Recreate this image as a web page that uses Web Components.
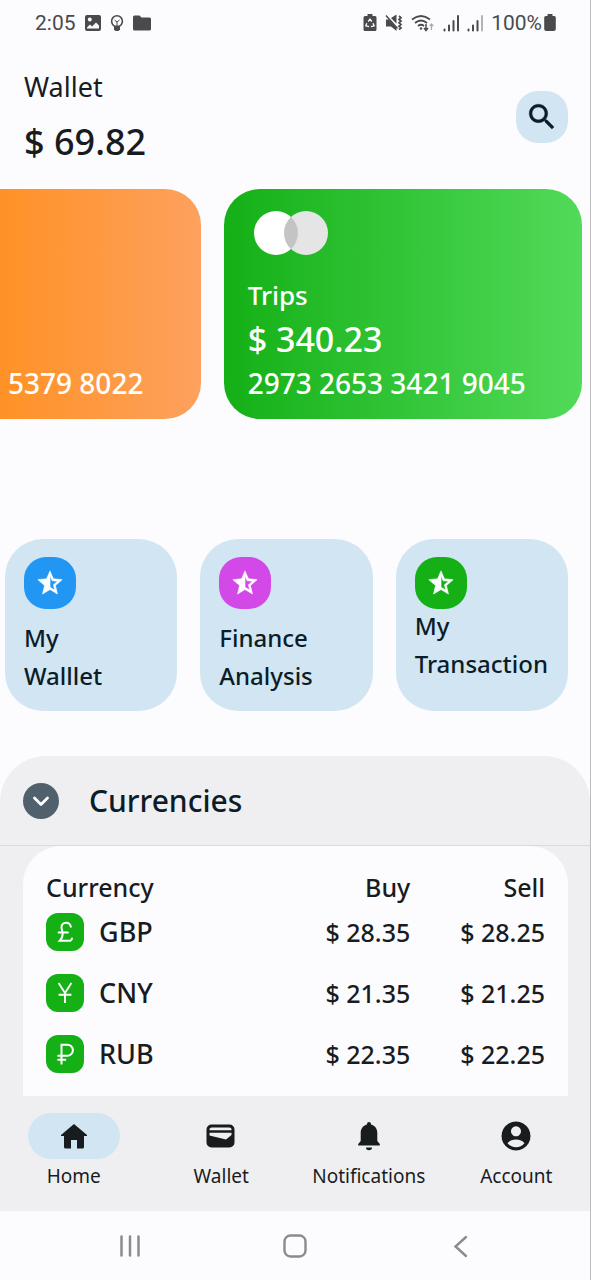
<!DOCTYPE html>
<html lang="en">
<head>
<meta charset="utf-8">
<meta name="viewport" content="width=device-width, initial-scale=1">
<title>Wallet</title>
<style>
  html { height: 100%; }
  body {
    margin: 0;
    min-height: 100%;
    font-family: "Noto Sans", "Open Sans", sans-serif;
    --surface: #fcfcff;
    --surface-dim: #efeff1;
    --tint: #d2e5f3;
    --ink: #191c1f;
    --ink-blue: #0b1d29;
    --green: #14b016;
    background: var(--surface);
    color: var(--ink);
  }
</style>
</head>
<body>
<wallet-app></wallet-app>

<script>
const ICONS = {
  image: [18, 18, '<path fill-rule="evenodd" d="M3 1h12a2 2 0 0 1 2 2v12a2 2 0 0 1-2 2H3a2 2 0 0 1-2-2V3a2 2 0 0 1 2-2zM5.800 3.600a2 2 0 1 0 .01 0zM3 14.500h12v-3l-3-3-4 4-2-2-3 3z"/>'],
  bulb: [14, 18, '<path d="M4.500 12.200C2.500 10.800 1.600 9.300 1.600 7.200a5.400 5.400 0 0 1 10.800 0c0 2.100-.9 3.600-2.900 5z" fill="none" stroke="currentColor" stroke-width="1.500"/><path d="M4.500 6l2.500 2 2.500-2M7 8v4" fill="none" stroke="currentColor" stroke-width="1"/><path d="M4 13h6v2.500L8.500 17h-3L4 15.500z"/>'],
  folder: [20, 18, '<path d="M2.500 1.500h5l2 2h8a1.500 1.500 0 0 1 1.500 1.500v10a1.500 1.500 0 0 1-1.500 1.500h-15A1.500 1.500 0 0 1 1 15V3a1.500 1.500 0 0 1 1.500-1.500z"/>'],
  recycle: [14, 20, '<path d="M4.500 1h5v2H12a1.500 1.500 0 0 1 1.500 1.500v12A1.500 1.500 0 0 1 12 18H2a1.500 1.500 0 0 1-1.500-1.500v-12A1.500 1.500 0 0 1 2 3h2.500z"/><path d="M5.200 8.500L7 6l1.800 2.500M10 10.200l1.200 2.600-3.200.8M3.800 10.200l-1 2.600 3.200.8" fill="none" stroke="#fcfcff" stroke-width="1.300"/>'],
  mute: [18, 18, '<path d="M1 5.500h3l7.500 8V17L6 12.500H1zM6 4l5.500-3.500v9z"/><path d="M1 1.500l11.500 13" stroke="currentColor" stroke-width="1.500"/><path d="M14 2l2 1.700-2 1.700 2 1.700-2 1.700 2 1.700-2 1.700 2 1.700-2 1.700" fill="none" stroke="currentColor" stroke-width="1.700"/>'],
  wifi: [24, 18, '<g fill="none" stroke="currentColor" stroke-width="1.800"><path d="M1 5.500q9-7 18 0M4 9q6-5 12 0M7 12q3-2.500 6 0"/></g><circle cx="10" cy="14.500" r="1.200"/><path d="M15 10v6M13 14l2 2.500 2-2.500" fill="none" stroke="currentColor" stroke-width="1.500"/><path d="M20.500 16v-6M18.700 12l1.800-2 1.800 2" fill="none" stroke="#a8a8aa" stroke-width="1.200"/>'],
  signal: [16, 18, '<g stroke="currentColor" stroke-width="2" stroke-linecap="round"><path d="M1.500 15.500v1M6 11.500v5M10.500 7v9.500M15 2v14.500"/></g>'],
  signalLow: [16, 18, '<g stroke="currentColor" stroke-width="2" stroke-linecap="round"><path d="M1.500 15.500v1M6 11.500v5M10.500 7v9.500"/><path d="M15 2v14.500" stroke="#b4b4b6"/></g>'],
  battery: [12, 20, '<path d="M3.500 1h5v2h1.800a1.500 1.500 0 0 1 1.500 1.500V16a2 2 0 0 1-2 2H2.200a2 2 0 0 1-2-2V4.500A1.500 1.500 0 0 1 1.700 3h1.800z"/>'],
  search: [24, 24, '<path d="M15.500 14h-.79l-.28-.27C15.410 12.590 16 11.110 16 9.500 16 5.910 13.090 3 9.500 3S3 5.910 3 9.500 5.910 16 9.500 16c1.610 0 3.090-.59 4.230-1.570l.27.28v.79l5 4.990L20.490 19l-4.990-5zm-6 0C7.010 14 5 11.990 5 9.500S7.010 5 9.500 5 14 7.010 14 9.500 11.990 14 9.500 14z" stroke="currentColor" stroke-width=".3"/>'],
  star: [24, 24, '<path stroke="currentColor" stroke-width=".5" stroke-linejoin="round" d="M21.700 9.300l-7-.65L12 2.300 9.300 8.650l-7 .65 5.350 4.700-1.600 6.800L12 17.200l5.950 3.600-1.600-6.800zM12 15.400V6.100l1.710 4.040 4.380.38-3.320 2.880 1 4.280z"/>'],
  chevron: [24, 24, '<path d="M5.500 9l6.500 6.500L18.500 9" fill="none" stroke="currentColor" stroke-width="2.800" stroke-linecap="round" stroke-linejoin="round"/>'],
  pound: [24, 24, '<path d="M17 7.500C16.500 5 14.800 4 13 4 10.500 4 9 5.800 9 8c0 2 1 3 1 5.500 0 2.500-1 4.500-2.500 6h8c1.500 0 2.200-.8 2.500-2M6.500 12.500h8" fill="none" stroke="currentColor" stroke-width="1.700" stroke-linecap="round"/>'],
  yuan: [24, 24, '<path d="M6.500 3.500L12 12l5.500-8.500M12 12v8.500M6.500 13.500h11" fill="none" stroke="currentColor" stroke-width="1.600"/>'],
  ruble: [24, 24, '<path d="M9 21V4h5a4.500 4.500 0 0 1 0 9.500H5.500M5.500 17H13" fill="none" stroke="currentColor" stroke-width="1.700"/>'],
  home: [28, 28, '<path d="M14 2L27 13v1H24V25a1.500 1.500 0 0 1-1.500 1.500H17v-8.500h-6v8.500H5.500A1.500 1.500 0 0 1 4 25V14H1v-1z"/>'],
  wallet: [30, 26, '<path fill-rule="evenodd" d="M5.500 1.500h18a5 5 0 0 1 5 5v13a5 5 0 0 1-5 5h-18a5 5 0 0 1-5-5v-13a5 5 0 0 1 5-5zM6 4.500a2.500 2.500 0 0 0-2.500 2.800h22A2.500 2.500 0 0 0 23 4.500zM3.500 9.800v2.700l16.500 4 5.500-4.500V9.800z"/>'],
  bell: [24, 30, '<path d="M12 1a2 2 0 0 1 2 2v.6c4 1 6.300 4.200 6.300 8.400V20l2.500 3v1.500H1.200V23l2.500-3v-8c0-4.200 2.300-7.400 6.300-8.400V3a2 2 0 0 1 2-2zM9 26.500h6a3 2.800 0 0 1-6 0z"/>'],
  account: [30, 30, '<path fill-rule="evenodd" d="M15 .5a14.500 14.500 0 1 0 .01 0zM15 5.300a5 5 0 1 1-.01 0zM15 18.500c3.600 0 6.600 1.300 8.500 3.700A11.200 11.200 0 0 1 15 26.200a11.200 11.200 0 0 1-8.500-4C8.400 19.800 11.400 18.500 15 18.500z"/>'],
  recents: [24, 24, '<path d="M3.500 2.500v19M12 2.500v19M20.500 2.500v19" stroke="currentColor" stroke-width="2.500" stroke-linecap="round"/>'],
  square: [24, 24, '<rect x="1.500" y="1.500" width="21" height="21" rx="6" fill="none" stroke="currentColor" stroke-width="2.400"/>'],
  back: [24, 24, '<path d="M18 3L7.500 12.500 18 22" fill="none" stroke="currentColor" stroke-width="2.400" stroke-linecap="round"/>'],
  network: [74, 44, '<circle cx="22" cy="22" r="22" fill="#fff"/><circle cx="52" cy="22" r="22" fill="#e5e5e5"/><path d="M37 6a22 22 0 0 1 0 32a22 22 0 0 1 0-32z" fill="#c4c4c4"/>']
};

function define(name, html, setup) {
  const tpl = document.createElement('template');
  tpl.innerHTML = html;
  customElements.define(name, class extends HTMLElement {
    constructor() {
      super();
      this.attachShadow({ mode: 'open' }).append(tpl.content.cloneNode(true));
    }
    connectedCallback() {
      if (setup) setup(this, this.shadowRoot);
    }
  });
}

define('app-icon', `
  <style>:host { display: block; flex: none; line-height: 0 } svg { display: block; fill: currentColor }</style>
  <svg aria-hidden="true"></svg>`, (el, root) => {
  const [w, h, body] = ICONS[el.getAttribute('name')];
  const scale = (Number(el.getAttribute('size')) || w) / w;
  const svg = root.querySelector('svg');
  svg.setAttribute('viewBox', `0 0 ${w} ${h}`);
  svg.setAttribute('width', w * scale);
  svg.setAttribute('height', h * scale);
  svg.innerHTML = body;
});

define('status-bar', `
  <style>
    :host { display: flex; justify-content: space-between; height: 46px; padding: 0 34px 0 35px;
            color: #4a4a4c; font: 21px/46px Roboto, sans-serif; }
    div { display: flex; align-items: center; gap: 8px; }
    .charge { display: flex; align-items: center; gap: 2px; }
  </style>
  <div><span>2:05</span><app-icon name="image"></app-icon><app-icon name="bulb"></app-icon><app-icon name="folder"></app-icon></div>
  <div><app-icon name="recycle"></app-icon><app-icon name="mute"></app-icon><app-icon name="wifi"></app-icon><app-icon name="signal"></app-icon><app-icon name="signalLow"></app-icon><span class="charge">100%<app-icon name="battery"></app-icon></span></div>`);

define('balance-header', `
  <style>
    :host { display: flex; justify-content: space-between; align-items: center; padding: 22px 22px 23px 24px; }
    h1, p { margin: 0; }
    h1 { font-size: 27px; line-height: 38px; font-weight: 400; }
    p { margin-top: 12px; font-size: 36px; line-height: 48px; font-weight: 500; }
    button { display: grid; place-items: center; width: 52px; height: 52px; padding: 0; border: 0;
             border-radius: 22px; background: var(--tint); color: var(--ink-blue); }
  </style>
  <div><h1>Wallet</h1><p>$ 69.82</p></div>
  <button type="button" aria-label="Search"><app-icon name="search" size="34"></app-icon></button>`);

define('bank-card', `
  <style>
    :host { display: flex; flex-direction: column; justify-content: flex-end; box-sizing: border-box;
            min-width: 0; height: 230px; padding: 22px 24px 14px; border-radius: 36px; color: #fff;
            background: linear-gradient(90deg, #14b016, #52da5a); font-weight: 500; line-height: 44px; }
    :host([peek]) { padding-left: 8px; border-radius: 0 36px 36px 0;
            background: linear-gradient(90deg, #ff9226, #fda15e); }
    ::slotted(app-icon) { margin: 0 6px auto; }
    ::slotted([slot=name]) { font-size: 26px; }
    ::slotted([slot=sum]) { font-size: 34px; }
    ::slotted([slot=number]) { font-size: 28px; white-space: nowrap; }
  </style>
  <slot></slot><slot name="name"></slot><slot name="sum"></slot><slot name="number"></slot>`);

define('card-strip', `
  <style>
    :host { display: grid; grid-template-columns: 14fr 25fr; gap: 23px; padding-right: 8px; }
  </style><slot></slot>`);

define('shortcut-tile', `
  <style>
    :host { display: block; min-width: 0; }
    button { display: flex; flex-direction: column; align-items: flex-start; width: 100%; height: 172px;
             padding: 18px 0 0 19px; border: 0; border-radius: 38px; background: var(--tint);
             color: var(--ink-blue); font: 500 24px/38px "Noto Sans", sans-serif; text-align: left; }
    .badge { display: grid; place-items: center; width: 52px; height: 52px; margin-bottom: 10px;
             border-radius: 22px; background: var(--badge); color: #fff; }
    :host([snug]) .badge { margin-bottom: -2px; }
  </style>
  <button type="button"><span class="badge"><app-icon name="star" size="30"></app-icon></span><slot></slot></button>`);

define('shortcut-row', `
  <style>
    :host { display: grid; grid-template-columns: repeat(3, 1fr); gap: 23px; padding: 120px 22px 45px 5px; }
  </style><slot></slot>`);

define('currency-sheet', `
  <style>
    :host { display: flex; flex-direction: column; flex: 1; background: var(--surface-dim); border-radius: 46px 46px 0 0; }
    header { display: flex; align-items: center; gap: 30px; height: 89px; padding-left: 23px; border-bottom: 1px solid #c9e0f2; }
    header button { display: grid; place-items: center; width: 36px; height: 36px; padding: 0; border: 0;
             border-radius: 50%; background: #50606c; color: #fff; }
    h2 { margin: 0; font-size: 30px; line-height: 40px; font-weight: 500; color: var(--ink-blue); }
    .panel { flex: 1; margin: 0 22px 0 23px; padding: 27px 23px 11px; background: var(--surface); border-radius: 38px 38px 0 0; }
    table { width: 100%; border-collapse: collapse; table-layout: fixed; font-weight: 500; }
    th, td { padding: 0; text-align: right; font-size: 25px; font-weight: 500; }
    thead th { height: 28px; line-height: 28px; }
    tbody th, tbody td { height: 61px; line-height: 36px; }
    th:first-child { text-align: left; }
    th:last-child { width: 27%; }
    th:nth-child(2) { width: 30%; }
    .unit { display: flex; align-items: center; gap: 15px; font-size: 27px; }
    .coin { display: grid; place-items: center; width: 38px; height: 38px; border-radius: 12px; background: var(--green); color: #fff; }
  </style>
  <header><button type="button" aria-label="Collapse currencies"><app-icon name="chevron" size="24"></app-icon></button><h2>Currencies</h2></header>
  <div class="panel">
    <table>
      <thead><tr><th scope="col">Currency</th><th scope="col">Buy</th><th scope="col">Sell</th></tr></thead>
      <tbody></tbody>
    </table>
  </div>`, (el, root) => {
  const rows = [
    ['pound', 'GBP', '$ 28.35', '$ 28.25'],
    ['yuan', 'CNY', '$ 21.35', '$ 21.25'],
    ['ruble', 'RUB', '$ 22.35', '$ 22.25']
  ];
  root.querySelector('tbody').innerHTML = rows.map(([icon, code, buy, sell]) => `
    <tr><th scope="row"><span class="unit"><span class="coin"><app-icon name="${icon}" size="28"></app-icon></span>${code}</span></th><td>${buy}</td><td>${sell}</td></tr>`).join('');
});

define('nav-item', `
  <style>
    :host { display: block; min-width: 0; }
    a { display: flex; flex-direction: column; align-items: center; color: var(--ink);
        font-size: 19px; line-height: 34px; font-weight: 400; text-decoration: none; }
    .pill { display: grid; place-items: center; width: 92px; height: 46px; border-radius: 23px; }
    :host([current]) .pill { background: var(--tint); }
  </style>
  <a href="#"><span class="pill"><slot name="icon"></slot></span><slot></slot></a>`);

define('tab-bar', `
  <style>
    :host { display: grid; grid-template-columns: repeat(4, 1fr); padding: 17px 0 18px; background: var(--surface-dim); }
  </style><slot></slot>`);

define('system-bar', `
  <style>
    :host { display: grid; grid-template-columns: repeat(3, 1fr); height: 69px; padding: 0 8%; color: #8b8b8d; }
    button { display: grid; place-items: center; padding: 0; border: 0; background: none; color: inherit; }
  </style>
  <button type="button" aria-label="Recent apps"><app-icon name="recents"></app-icon></button>
  <button type="button" aria-label="Home screen"><app-icon name="square"></app-icon></button>
  <button type="button" aria-label="Back"><app-icon name="back"></app-icon></button>`);

define('wallet-app', `
  <style>
    :host { display: flex; flex-direction: column; box-sizing: border-box; min-height: 100vh; border-right: 1px solid #bcbcbf; }
  </style>
  <status-bar></status-bar>
  <balance-header></balance-header>
  <card-strip>
    <bank-card peek><span slot="number">5379 8022</span></bank-card>
    <bank-card>
      <app-icon name="network"></app-icon>
      <span slot="name">Trips</span><span slot="sum">$ 340.23</span><span slot="number">2973 2653 3421 9045</span>
    </bank-card>
  </card-strip>
  <shortcut-row>
    <shortcut-tile style="--badge: #2196f3">My<br>Walllet</shortcut-tile>
    <shortcut-tile style="--badge: #d349e8">Finance<br>Analysis</shortcut-tile>
    <shortcut-tile snug style="--badge: #14b016">My<br>Transaction</shortcut-tile>
  </shortcut-row>
  <currency-sheet></currency-sheet>
  <tab-bar>
    <nav-item current><app-icon slot="icon" name="home"></app-icon>Home</nav-item>
    <nav-item><app-icon slot="icon" name="wallet"></app-icon>Wallet</nav-item>
    <nav-item><app-icon slot="icon" name="bell"></app-icon>Notifications</nav-item>
    <nav-item><app-icon slot="icon" name="account"></app-icon>Account</nav-item>
  </tab-bar>
  <system-bar></system-bar>`);
</script>
</body>
</html>
